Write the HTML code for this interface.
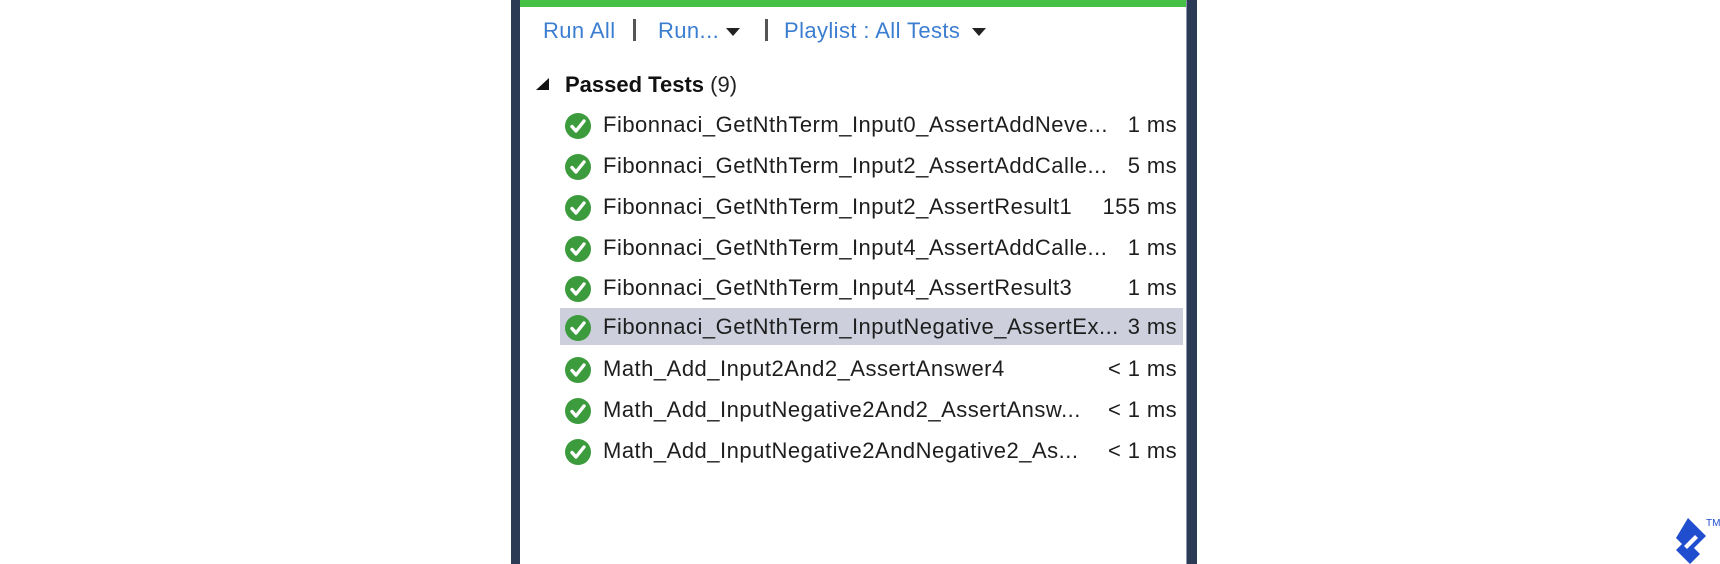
<!DOCTYPE html>
<html><head><style>
html,body{margin:0;padding:0;background:#fff;width:1720px;height:564px;overflow:hidden;position:relative;font-family:"Liberation Sans",sans-serif;}
.panel{position:absolute;left:511px;top:0;width:686px;height:564px;background:#2b3a55;}
.inner{position:absolute;left:9px;top:0;width:666px;height:564px;background:#fff;border-right:1px solid #8a96ad;}
.green{position:absolute;left:0;top:0;width:666px;height:7px;background:#46c146;}
.t{position:absolute;white-space:nowrap;font-size:22px;line-height:26px;letter-spacing:0.4px;}
.blue{color:#3b7dd0;}
.sep{position:absolute;width:3px;height:22px;background:#555;top:19px;}
.car{position:absolute;width:0;height:0;border-left:7px solid transparent;border-right:7px solid transparent;border-top:8px solid #222;top:28px;}
.row{position:absolute;left:40px;width:623px;height:37px;}
.row .ic{position:absolute;left:5px;top:9px;width:26px;height:26px;}
.row .n{position:absolute;left:43px;top:8px;font-size:22px;line-height:26px;color:#1e1e1e;white-space:nowrap;letter-spacing:0.5px;}
.row .ms{position:absolute;right:6px;top:8px;font-size:22px;line-height:26px;color:#1e1e1e;white-space:nowrap;letter-spacing:0.4px;}
.hl{background:#cdcfdc;}
</style></head><body>
<div class="panel"><div class="inner">
<div class="green"></div>
<div class="t blue" style="left:23px;top:18px;">Run All</div>
<div class="sep" style="left:113px;"></div>
<div class="t blue" style="left:138px;top:18px;">Run...</div>
<div class="car" style="left:206px;"></div>
<div class="sep" style="left:245px;"></div>
<div class="t blue" style="left:264px;top:18px;">Playlist : All Tests</div>
<div class="car" style="left:452px;"></div>
<div style="position:absolute;left:16px;top:78px;width:0;height:0;border-left:13px solid transparent;border-bottom:12px solid #111;"></div>
<div class="t" style="left:45px;top:72px;color:#111;letter-spacing:0;"><b>Passed Tests</b> <span style="color:#222">(9)</span></div>

<div class="row" style="top:104px"><svg class="ic" viewBox="0 0 26 26"><circle cx="13" cy="13" r="13" fill="#3c9b3c"/><path d="M7 13.5l4 4.5 8-10" stroke="#fff" stroke-width="3.4" fill="none" stroke-linecap="round" stroke-linejoin="round"/></svg><div class="n">Fibonnaci_GetNthTerm_Input0_AssertAddNeve...</div><div class="ms">1 ms</div></div>
<div class="row" style="top:145px"><svg class="ic" viewBox="0 0 26 26"><circle cx="13" cy="13" r="13" fill="#3c9b3c"/><path d="M7 13.5l4 4.5 8-10" stroke="#fff" stroke-width="3.4" fill="none" stroke-linecap="round" stroke-linejoin="round"/></svg><div class="n">Fibonnaci_GetNthTerm_Input2_AssertAddCalle...</div><div class="ms">5 ms</div></div>
<div class="row" style="top:186px"><svg class="ic" viewBox="0 0 26 26"><circle cx="13" cy="13" r="13" fill="#3c9b3c"/><path d="M7 13.5l4 4.5 8-10" stroke="#fff" stroke-width="3.4" fill="none" stroke-linecap="round" stroke-linejoin="round"/></svg><div class="n">Fibonnaci_GetNthTerm_Input2_AssertResult1</div><div class="ms">155 ms</div></div>
<div class="row" style="top:227px"><svg class="ic" viewBox="0 0 26 26"><circle cx="13" cy="13" r="13" fill="#3c9b3c"/><path d="M7 13.5l4 4.5 8-10" stroke="#fff" stroke-width="3.4" fill="none" stroke-linecap="round" stroke-linejoin="round"/></svg><div class="n">Fibonnaci_GetNthTerm_Input4_AssertAddCalle...</div><div class="ms">1 ms</div></div>
<div class="row" style="top:267px"><svg class="ic" viewBox="0 0 26 26"><circle cx="13" cy="13" r="13" fill="#3c9b3c"/><path d="M7 13.5l4 4.5 8-10" stroke="#fff" stroke-width="3.4" fill="none" stroke-linecap="round" stroke-linejoin="round"/></svg><div class="n">Fibonnaci_GetNthTerm_Input4_AssertResult3</div><div class="ms">1 ms</div></div>
<div class="row hl" style="top:308px"><svg class="ic" viewBox="0 0 26 26" style="top:7px"><circle cx="13" cy="13" r="13" fill="#3c9b3c"/><path d="M7 13.5l4 4.5 8-10" stroke="#fff" stroke-width="3.4" fill="none" stroke-linecap="round" stroke-linejoin="round"/></svg><div class="n" style="top:6px">Fibonnaci_GetNthTerm_InputNegative_AssertEx...</div><div class="ms" style="top:6px">3 ms</div></div>
<div class="row" style="top:348px"><svg class="ic" viewBox="0 0 26 26"><circle cx="13" cy="13" r="13" fill="#3c9b3c"/><path d="M7 13.5l4 4.5 8-10" stroke="#fff" stroke-width="3.4" fill="none" stroke-linecap="round" stroke-linejoin="round"/></svg><div class="n">Math_Add_Input2And2_AssertAnswer4</div><div class="ms">&lt; 1 ms</div></div>
<div class="row" style="top:389px"><svg class="ic" viewBox="0 0 26 26"><circle cx="13" cy="13" r="13" fill="#3c9b3c"/><path d="M7 13.5l4 4.5 8-10" stroke="#fff" stroke-width="3.4" fill="none" stroke-linecap="round" stroke-linejoin="round"/></svg><div class="n">Math_Add_InputNegative2And2_AssertAnsw...</div><div class="ms">&lt; 1 ms</div></div>
<div class="row" style="top:430px"><svg class="ic" viewBox="0 0 26 26"><circle cx="13" cy="13" r="13" fill="#3c9b3c"/><path d="M7 13.5l4 4.5 8-10" stroke="#fff" stroke-width="3.4" fill="none" stroke-linecap="round" stroke-linejoin="round"/></svg><div class="n">Math_Add_InputNegative2AndNegative2_As...</div><div class="ms">&lt; 1 ms</div></div>
</div></div>

<svg style="position:absolute;left:1674px;top:518px" width="34" height="46" viewBox="0 0 34 46">
<path d="M14 0 L32 18 L20 30 L26 36 L16 46 L2 32 L8 26 L2 20 Z" fill="#204ecf"/>
<path d="M10 28 L21 17 L24 20 L13 31 Z" fill="#fff"/>
</svg>
<div style="position:absolute;left:1706px;top:518px;font-size:10px;color:#204ecf;">TM</div>
</body></html>
